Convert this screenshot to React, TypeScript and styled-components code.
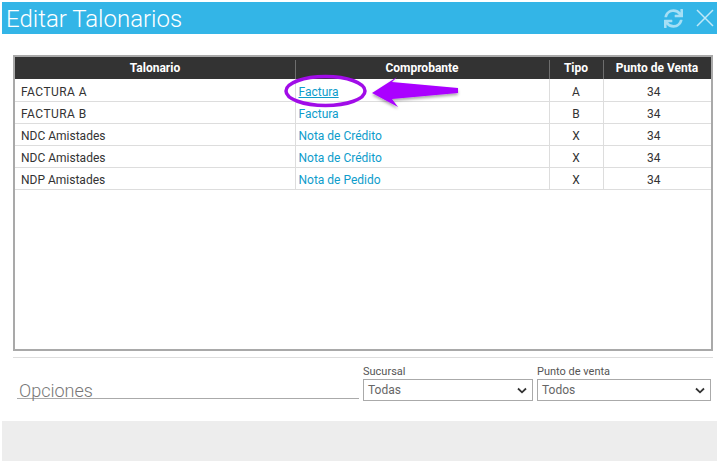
import React from "react";
import styled, { createGlobalStyle } from "styled-components";
import { FaSync } from "react-icons/fa";

const Global = createGlobalStyle`
  html, body {
    margin: 0;
    padding: 0;
    background: #FFFFFF;
  }
  body {
    font-family: Roboto, "Liberation Sans", sans-serif;
  }
`
const Page = styled.div`
  position: relative;
  width: 719px;
  height: 463px;
  box-sizing: border-box;
  padding: 2px;
  display: flex;
  flex-direction: column;
  overflow: hidden;
`
const TitleBar = styled.div`
  height: 32px;
  flex: none;
  display: flex;
  align-items: center;
  justify-content: space-between;
  padding: 0 3px 0 5px;
  background: #33B5E7;
`
const Title = styled.div`
  font-weight: 300;
  font-size: 24px;
  line-height: 34px;
  height: 32px;
  margin-left: -1px;
  color: #FFFFFF;
`
const TitleIcons = styled.div`
  display: flex;
  align-items: center;
  gap: 13px;
  color: #A6DFF5;
`
const Body = styled.div`
  flex: 1;
  padding: 21px 4px 0 11px;
`
const TableBox = styled.div`
  height: 296px;
  box-sizing: border-box;
  border: 2px solid #A9A9A9;
`
const Table = styled.table`
  width: 100%;
  table-layout: fixed;
  border-collapse: collapse;
  font-size: 12px;
`
const HeadCell = styled.th`
  height: 22px;
  padding: 0;
  background: #333333;
  color: #FFFFFF;
  font-weight: 700;
  font-size: 12px;
  text-align: center;
  position: relative;

  &:not(:first-child)::before {
    content: "";
    position: absolute;
    left: 0;
    top: 3px;
    bottom: 0;
    width: 1px;
    background: #6E6E6E;
  }
`
const Row = styled.tr`
  height: 22px;
  border-bottom: 1px solid #DDDDDD;

  &:first-child td {
    padding-top: 5px;
  }
`
const Cell = styled.td`
  padding: 3px 0 0 3px;
  border-left: 1px solid #DDDDDD;
  color: #333333;
  font-size: 12px;
`
const NameCell = styled(Cell)<{ $caps?: boolean }>`
  padding-left: 6px;
  border-left: none;
  letter-spacing: ${(p) => (p.$caps ? 0.45 : 0)}px;
`
const CenterCell = styled(Cell)<{ $shift?: number }>`
  padding-left: 0;
  padding-right: ${(p) => p.$shift || 0}px;
  text-align: center;
`
const Link = styled.a<{ $active?: boolean }>`
  color: #0E9CCB;
  text-decoration: ${(p) => (p.$active ? "underline" : "none")};
`
const Divider = styled.div`
  height: 1px;
  margin-top: 6px;
  background: #DDDDDD;
`
const Options = styled.div`
  display: flex;
  align-items: flex-end;
  padding: 7px 2px 0 4px;
`
const OptionsTitle = styled.div`
  width: 342px;
  flex: none;
  box-sizing: border-box;
  height: 24px;
  padding-left: 2px;
  border-bottom: 1px solid #AAAAAA;
  margin-bottom: 2px;
  font-weight: 300;
  font-size: 18px;
  line-height: 32px;
  color: #777777;
`
const Field = styled.div<{ $width: number; $gap: number }>`
  width: ${(p) => p.$width}px;
  margin-left: ${(p) => p.$gap}px;
`
const FieldLabel = styled.div`
  font-size: 11px;
  line-height: 14px;
  color: #555555;
`
const SelectBox = styled.div`
  height: 22px;
  box-sizing: border-box;
  border: 1px solid #AAAAAA;
  display: flex;
  align-items: center;
  justify-content: space-between;
  padding: 0 5px 0 4px;
  font-size: 12px;
  color: #666666;
`
const Footer = styled.div`
  height: 40px;
  flex: none;
  background: #EDEDED;
`
const Annotation = styled.svg`
  position: absolute;
  left: 270px;
  top: 65px;
  pointer-events: none;
`

const rows = [
    { name: "FACTURA A", type: "Factura", letter: "A", caps: true, active: true },
    { name: "FACTURA B", type: "Factura", letter: "B", caps: true },
    { name: "NDC Amistades", type: "Nota de Crédito", letter: "X" },
    { name: "NDC Amistades", type: "Nota de Crédito", letter: "X" },
    { name: "NDP Amistades", type: "Nota de Pedido", letter: "X" },
]

function Chevron() {
    return (
        <svg width="10" height="7" viewBox="0 0 10 7">
            <path d="M1 1.5 L5 5.3 L9 1.5" fill="none" stroke="#333333" strokeWidth="1.8" />
        </svg>
    )
}

function App() {
    return (
        <Page>
            <Global />
            <TitleBar>
                <Title>Editar Talonarios</Title>
                <TitleIcons>
                    <FaSync size={19} />
                    <svg width="18" height="18" viewBox="0 0 18 18" fill="none" stroke="#BFE8F8" strokeWidth="1.5">
                        <path d="M1 1 L17 17 M17 1 L1 17" />
                    </svg>
                </TitleIcons>
            </TitleBar>
            <Body>
                <TableBox>
                    <Table>
                        <colgroup>
                            <col style={{ width: 280 }} />
                            <col style={{ width: 254 }} />
                            <col style={{ width: 54 }} />
                            <col />
                        </colgroup>
                        <thead>
                            <tr>
                                <HeadCell>Talonario</HeadCell>
                                <HeadCell>Comprobante</HeadCell>
                                <HeadCell>Tipo</HeadCell>
                                <HeadCell>Punto de Venta</HeadCell>
                            </tr>
                        </thead>
                        <tbody>
                            {rows.map((row, i) => (
                                <Row key={i}>
                                    <NameCell $caps={row.caps}>{row.name}</NameCell>
                                    <Cell><Link $active={row.active}>{row.type}</Link></Cell>
                                    <CenterCell>{row.letter}</CenterCell>
                                    <CenterCell $shift={7}>34</CenterCell>
                                </Row>
                            ))}
                        </tbody>
                    </Table>
                </TableBox>
                <Divider />
                <Options>
                    <OptionsTitle>Opciones</OptionsTitle>
                    <Field $width={170} $gap={4}>
                        <FieldLabel>Sucursal</FieldLabel>
                        <SelectBox>Todas<Chevron /></SelectBox>
                    </Field>
                    <Field $width={174} $gap={4}>
                        <FieldLabel>Punto de venta</FieldLabel>
                        <SelectBox>Todos<Chevron /></SelectBox>
                    </Field>
                </Options>
            </Body>
            <Footer />
            <Annotation width="200" height="60" viewBox="0 0 200 60">
                <defs>
                    <filter id="sh" x="-20%" y="-40%" width="140%" height="180%">
                        <feDropShadow dx="0" dy="2" stdDeviation="1.5" floodColor="#000000" floodOpacity="0.35" />
                    </filter>
                </defs>
                <ellipse cx="55.5" cy="26" rx="39.5" ry="14.5" fill="none" stroke="#A10CE8" strokeWidth="3.5" />
                <path d="M102 28 L127 12 L122 17 L188 23 L188 28 L122 34 L128 42 Z" fill="#AA00FF" filter="url(#sh)" />
            </Annotation>
        </Page>
    )
}

export default App
